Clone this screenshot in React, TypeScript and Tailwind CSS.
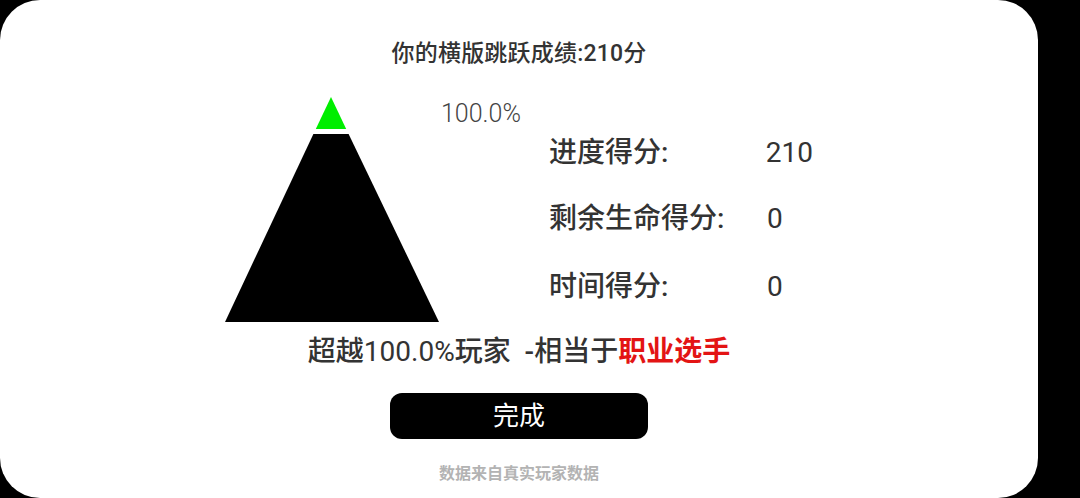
import React from "react";

const font = { fontFamily: 'Roboto, "Noto Sans CJK SC", sans-serif' };

function Mountain() {
  // apex at top, green peak split from black body by a thin white gap
  return (
    <svg width="215" height="226" viewBox="0 0 215 226" className="shrink-0">
      <polygon points="106,0 121.2,32 90.8,32" fill="#00ee00" />
      <polygon points="88.4,37 123.6,37 214,225 0,225" fill="#000" />
    </svg>
  );
}

const scores = [
  { label: "进度得分:", value: "210", mt: "mt-[36px]" },
  { label: "剩余生命得分:", value: "0", mt: "mt-[26px]" },
  { label: "时间得分:", value: "0", mt: "mt-[28px]" },
];

export default function App() {
  return (
    <div className="w-full h-[498px] bg-black overflow-hidden" style={font}>
      <div className="w-[1038px] h-[498px] bg-white rounded-[40px] flex flex-col items-center">
        {/* Title */}
        <h1 className="pt-[40px] text-[23px] leading-[28px] font-medium text-[#333] tracking-[0.2px]">
          你的横版跳跃成绩:210分
        </h1>

        {/* Mountain + scores */}
        <div className="mt-[29px] flex flex-row">
          <div className="w-[324px] flex flex-row">
            <Mountain />
            <span className="ml-px mt-[2px] text-[25px] leading-[30px] font-light text-[#444]">
              100.0%
            </span>
          </div>
          <div className="flex flex-col w-[264px]">
            {scores.map((s) => (
              <div key={s.label} className={`${s.mt} flex flex-row text-[28px] leading-[40px] font-medium text-[#333]`}>
                <span className="w-[218px]">{s.label}</span>
                <span className="font-normal">{s.value}</span>
              </div>
            ))}
          </div>
        </div>

        {/* Rank line */}
        <p className="mt-[11px] text-[28px] leading-[36px] font-medium text-[#333]">
          超越<span className="font-normal">100.0%</span>玩家&nbsp; -相当于
          <span className="font-bold text-[#e31414]">职业选手</span>
        </p>

        {/* Done button */}
        <button className="mt-[23px] w-[258px] h-[46px] rounded-[12px] bg-black text-white text-[26px] leading-[46px]">
          完成
        </button>

        {/* Footer */}
        <p className="mt-[24px] text-[16px] leading-[22px] font-bold text-[#b3b3b3]">
          数据来自真实玩家数据
        </p>
      </div>
    </div>
  );
}
